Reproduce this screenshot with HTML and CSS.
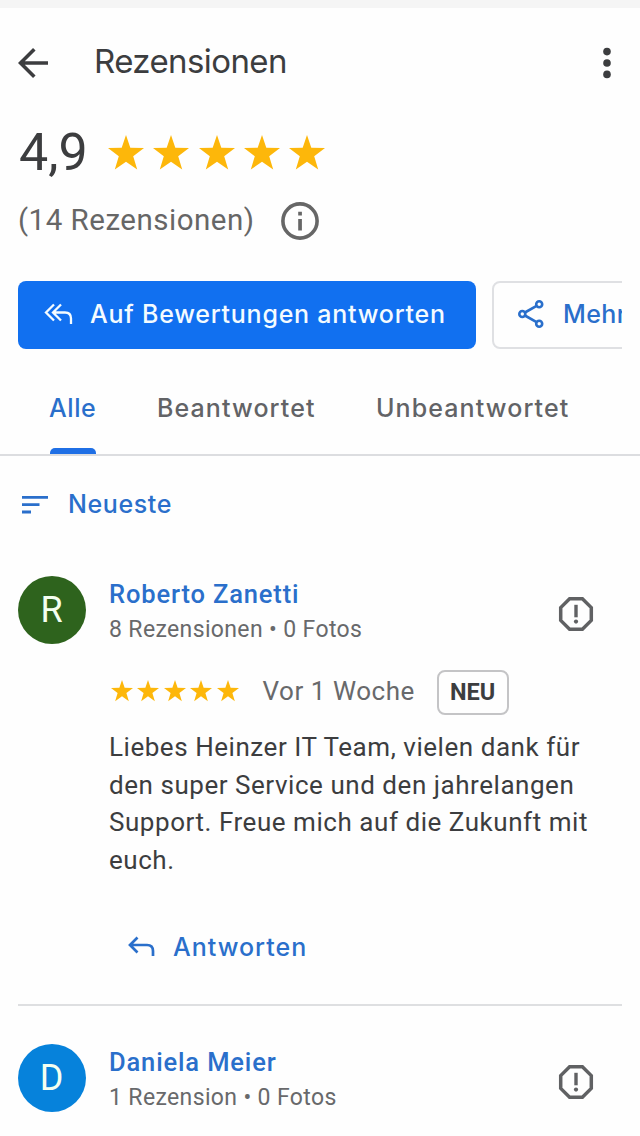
FILE: index.html
```html
<!DOCTYPE html>
<html lang="de">
<head>
<meta charset="utf-8">
<title>Rezensionen</title>
<link rel="stylesheet" href="styles.css">
</head>
<body>
<svg class="defs" width="0" height="0" aria-hidden="true">
  <symbol id="star" viewBox="0 0 36 36"><path d="M18 0 22.3 12.7 36 12.9 25.2 21.2 29.2 34.6 18 26.7 6.8 34.6 10.8 21.2 0 12.9 13.7 12.7Z"/></symbol>
  <symbol id="report" viewBox="0 0 36 36"><path d="M11.6 2.700H24.400L33.300 11.600V24.400L24.400 33.300H11.600L2.700 24.400V11.600Z" fill="none" stroke="currentColor" stroke-width="3.5"/><path d="M16.300 8.800H19.700V21.300H16.300Z"/><circle cx="18" cy="25.600" r="2.1"/></symbol>
</svg>
<div class="topbar"></div>
<header class="header">
  <svg class="back" viewBox="0 0 32 32"><path d="M30 16H3M16.3 2.2 2.5 16l13.8 13.8" fill="none" stroke="currentColor" stroke-width="3.6"/></svg>
  <h1 class="title">Rezensionen</h1>
  <svg class="more" viewBox="0 0 8 32"><circle cx="4" cy="4.6" r="3.8"/><circle cx="4" cy="16" r="3.8"/><circle cx="4" cy="27.4" r="3.8"/></svg>
</header>
<section class="rating">
  <span class="score">4,9</span>
  <span class="stars stars-large"><svg><use href="#star"/></svg><svg><use href="#star"/></svg><svg><use href="#star"/></svg><svg><use href="#star"/></svg><svg><use href="#star"/></svg></span>
</section>
<section class="count">
  <span class="count-text">(14 Rezensionen)</span>
  <svg class="info" viewBox="0 0 38 38"><circle cx="19" cy="19" r="17.1" fill="none" stroke="currentColor" stroke-width="3.6"/><path d="M17.2 17h3.7v11.4h-3.7zM17.2 9.8h3.7v3.7h-3.7z"/></svg>
</section>
<div class="actions">
  <button class="btn btn-primary">
    <svg class="reply-all" viewBox="0 0 30 22"><path d="M10 1.5 2 9.5l8 8M17 1.5 9 9.5l8 8M10 9.5h11q6 0 6 6v5.500" fill="none" stroke="currentColor" stroke-width="2.3"/></svg>
    <span class="btn-primary-text">Auf Bewertungen antworten</span>
  </button>
  <button class="btn btn-outline">
    <svg class="share" viewBox="0 0 26 28"><g fill="none" stroke="currentColor" stroke-width="2.6"><circle cx="4.300" cy="14" r="3"/><circle cx="21.200" cy="4.300" r="3"/><circle cx="21.200" cy="23.700" r="3"/><path d="M6.900 12.500 18.600 5.800M6.900 15.500l11.700 6.700"/></g></svg>
    <span class="btn-outline-text">Mehr</span>
  </button>
</div>
<nav class="tabs">
  <a class="tab tab-active">Alle</a>
  <a class="tab tab-answered">Beantwortet</a>
  <a class="tab tab-open">Unbeantwortet</a>
</nav>
<div class="sort">
  <svg class="sort-icon" viewBox="0 0 26 18"><path d="M0 0H26V2.800H0zM0 7.300H17.500V10.100H0zM0 14.600H9V17.400H0z"/></svg>
  <span class="sort-text">Neueste</span>
</div>
<article class="review">
  <div class="author">
    <span class="avatar avatar-green">R</span>
    <div class="who">
      <span class="name">Roberto Zanetti</span>
      <span class="meta">8 Rezensionen • 0 Fotos</span>
    </div>
    <svg class="report"><use href="#report"/></svg>
  </div>
  <div class="body">
    <div class="info-row">
      <span class="stars stars-small"><svg><use href="#star"/></svg><svg><use href="#star"/></svg><svg><use href="#star"/></svg><svg><use href="#star"/></svg><svg><use href="#star"/></svg></span>
      <span class="when">Vor 1 Woche</span>
      <span class="badge">NEU</span>
    </div>
    <p class="text">Liebes Heinzer IT Team, vielen dank für<br>den super Service und den jahrelangen<br>Support. Freue mich auf die Zukunft mit<br>euch.</p>
    <div class="reply">
      <svg class="reply-icon" viewBox="0 0 27 21"><path d="M9.500 1.500 2 9l7.500 7.500M2 9h17q6 0 6 6v5" fill="none" stroke="currentColor" stroke-width="2.700"/></svg>
      <span class="reply-text">Antworten</span>
    </div>
  </div>
</article>
<article class="review">
  <div class="author">
    <span class="avatar avatar-blue">D</span>
    <div class="who">
      <span class="name">Daniela Meier</span>
      <span class="meta">1 Rezension • 0 Fotos</span>
    </div>
    <svg class="report"><use href="#report"/></svg>
  </div>
</article>
</body>
</html>
```
FILE: styles.css
```css
* { box-sizing: border-box; }
body {
  margin: 0;
  width: 640px;
  height: 1136px;
  overflow: hidden;
  background: #fefefe;
  color: #3c3d3f;
  font-family: Roboto, sans-serif;
}
svg { display: block; flex: none; fill: currentColor; }
.defs { position: absolute; }
.topbar { height: 8px; background: #f5f5f5; }
.header { display: flex; align-items: center; height: 108px; padding: 0 29px 0 18px; }
.back { width: 32px; height: 32px; margin-top: 1px; }
.title { flex: 1; margin: 0 0 2px 44px; font: 400 33px/40px Inter, sans-serif; letter-spacing: -0.6px; }
.more { width: 8px; height: 32px; margin-top: 1px; }
.rating { display: flex; align-items: center; height: 74px; padding-left: 19px; }
.score { width: 89px; font-size: 52px; line-height: 60px; }
.stars { display: flex; color: #fdb70a; }
.stars-large { gap: 9.300px; }
.stars-large svg { width: 36px; height: 36px; }
.count { display: flex; align-items: center; height: 61px; padding-left: 18px; color: #666; }
.count-text { width: 263px; padding-bottom: 1px; font-size: 29.500px; letter-spacing: 0.5px; }
.info { width: 38px; height: 38px; }
.actions { display: flex; gap: 16px; width: 604px; height: 68px; margin: 30px 0 0 18px; overflow: hidden; }
.btn { display: flex; align-items: center; flex: none; height: 68px; border: 0; border-radius: 8px; font: 500 25px/32px Inter, sans-serif; white-space: nowrap; }
.btn-primary { width: 458px; padding: 0 0 2px 26px; gap: 16px; background: #1170f0; color: #f4fbff; letter-spacing: 0.76px; }
.btn-outline { width: 160px; padding: 0 0 2px 24px; gap: 19px; border: 2px solid #dfe0e3; background: #fefefe; color: #2a6fcb; letter-spacing: 0.4px; }
.reply-all { width: 30px; height: 22px; }
.share { width: 26px; height: 28px; }
.tabs { display: flex; height: 107px; padding-left: 50px; border-bottom: 2px solid #dcdde0; font: 500 25px/32px Inter, sans-serif; color: #626366; letter-spacing: 1.1px; }
.tab { padding-top: 43px; }
.tab-active { display: flex; flex-direction: column; justify-content: space-between; width: 46px; color: #2a6fcb; letter-spacing: 0.6px; text-indent: -1px; }
.tab-active::after { content: ""; height: 6px; border-radius: 5px 5px 0 0; background: #1f6fe5; }
.tab-answered { margin-left: 61px; width: 158px; }
.tab-open { margin-left: 61px; }
.sort { display: flex; align-items: center; height: 97px; padding-left: 22px; gap: 20px; color: #2a6fcb; font: 500 25px/32px Inter, sans-serif; letter-spacing: 0.6px; }
.sort-text { padding-bottom: 2px; }
.sort-icon { width: 26px; height: 18px; }
.review { margin: 0 18px; padding-top: 23px; }
.review + .review { padding-top: 38px; border-top: 2px solid #dedfe1; }
.author { display: flex; height: 68px; }
.avatar { width: 68px; height: 68px; border-radius: 50%; color: #f4fff0; font-size: 36px; line-height: 69px; text-align: center; text-indent: -1px; }
.avatar-green { background: #2e631d; }
.avatar-blue { background: #0682db; }
.who { display: flex; flex-direction: column; flex: 1; margin-left: 23px; }
.name { font-weight: 500; font-size: 25.500px; line-height: 37px; color: #2a6fcb; letter-spacing: 0.850px; }
.meta { font-size: 23px; line-height: 33px; color: #68696b; letter-spacing: 0.360px; }
.report { width: 36px; height: 36px; margin: 20px 28px 0 0; color: #606163; }
.body { margin-left: 91px; }
.info-row { display: flex; align-items: center; height: 44px; margin-top: 26px; }
.stars-small { gap: 4.400px; margin: 0 0 2px 2px; }
.stars-small svg { width: 22px; height: 22px; }
.when { width: 174px; margin: 0 0 2px 24px; font-size: 26px; color: #68696b; letter-spacing: 0.550px; white-space: nowrap; }
.badge { width: 72px; height: 45px; border: 2px solid #c4c4c6; border-radius: 8px; font-weight: 700; font-size: 23.500px; line-height: 41px; text-align: center; }
.text { margin: 15px 0 0; font-size: 26px; line-height: 37.600px; letter-spacing: 0.540px; white-space: nowrap; }
.reply { display: flex; align-items: center; height: 125px; padding: 10px 0 0 19px; gap: 18px; color: #2a6fcb; font: 500 25px/32px Inter, sans-serif; letter-spacing: 1px; }
.reply-icon { width: 27px; height: 21px; }
```
